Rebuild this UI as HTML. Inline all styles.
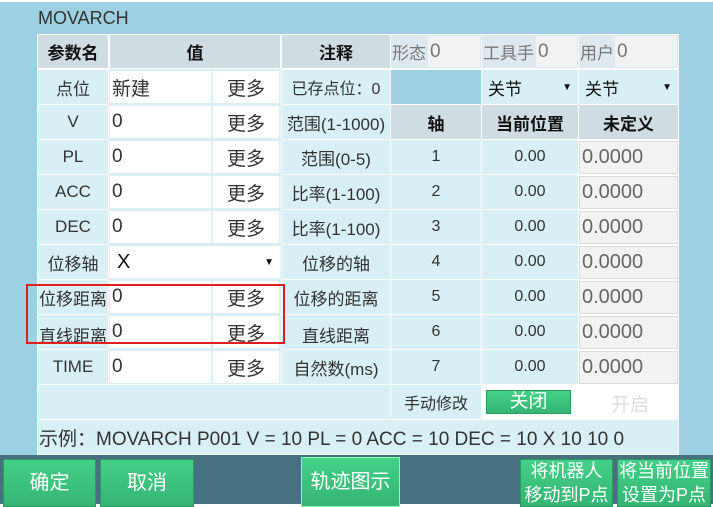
<!DOCTYPE html>
<html><head><meta charset="utf-8"><style>
*{margin:0;padding:0;box-sizing:border-box}
body{width:713px;height:504px;overflow:hidden;background:#fff;font-family:"Liberation Sans","Noto Sans CJK SC",sans-serif;color:#333;position:relative}
.bg{position:absolute;left:0;top:2px;width:713px;height:453px;background:#9dd0e2}
.t{position:absolute;left:37px;top:34px;width:642px;height:421px;background:#fff}
.c{position:absolute;display:flex;align-items:center;justify-content:center;font-size:16px;background:#d9eff6;white-space:nowrap}
.h{background:#cfdde2;font-weight:bold;color:#111;font-size:17px}
.w{background:#fff;justify-content:flex-start;padding-left:2px;font-size:19px}
.m{background:#fff;font-size:19px}
.g{background:#f2f2f2;border:1px solid #ddd;justify-content:flex-start;padding-left:2px;font-size:20px;color:#666}
.btn{position:absolute;background:linear-gradient(#44d088,#35b574);border:1px solid #2a9a5e;color:#fff;display:flex;align-items:center;justify-content:center;font-size:20px;text-align:center;line-height:24px;white-space:nowrap;overflow:hidden}
.bar{position:absolute;left:0;top:455px;width:713px;height:49px;background:#477080}
.arr{position:absolute;right:6px;font-size:10px;color:#111}
.vs{position:absolute;left:109px;width:172px;height:35px;background:#d9eff6}
</style></head><body>
<div class="bg"></div>
<div style="position:absolute;left:38px;top:8px;font-size:18px;color:#333">MOVARCH</div>
<div class="t"></div>
<div class="vs" style="top:69px"></div><div class="vs" style="top:104px"></div><div class="vs" style="top:139px"></div><div class="vs" style="top:174px"></div><div class="vs" style="top:209px"></div><div class="vs" style="top:244px"></div><div class="vs" style="top:279px"></div><div class="vs" style="top:314px"></div><div class="vs" style="top:349px"></div>

<div class="c h" style="left:38px;top:35px;width:70px;height:33px">参数名</div>
<div class="c h" style="left:110px;top:35px;width:170px;height:33px">值</div>
<div class="c h" style="left:282px;top:35px;width:108px;height:33px">注释</div>
<div class="c" style="left:391px;top:35px;width:90px;height:33px;background:#dde9ee;justify-content:flex-start;color:#777;font-size:17px"><span style="padding-left:1px">形态</span><span style="position:absolute;left:37px;top:1px;width:52px;height:31px;background:#f2f2f2;font-size:19px;padding-left:2px;line-height:31px">0</span></div>
<div class="c" style="left:482px;top:35px;width:96px;height:33px;background:#dde9ee;justify-content:flex-start;color:#777;font-size:17px"><span style="padding-left:1px">工具手</span><span style="position:absolute;left:54px;top:1px;width:41px;height:31px;background:#f2f2f2;font-size:19px;padding-left:2px;line-height:31px">0</span></div>
<div class="c" style="left:579px;top:35px;width:99px;height:33px;background:#dde9ee;justify-content:flex-start;color:#777;font-size:17px"><span style="padding-left:1px">用户</span><span style="position:absolute;left:36px;top:1px;width:62px;height:31px;background:#f2f2f2;font-size:19px;padding-left:2px;line-height:31px">0</span></div>

<div class="c" style="left:38px;top:70px;width:70px;height:34px;font-size:17px">点位</div>
<div class="c w" style="left:110px;top:71px;width:101px;height:32px">新建</div>
<div class="c m" style="left:213px;top:71px;width:66px;height:32px">更多</div>
<div class="c" style="left:282px;top:70px;width:108px;height:34px;font-size:16px">已存点位：0</div>

<div class="c" style="left:38px;top:105px;width:70px;height:34px;font-size:17px">V</div>
<div class="c w" style="left:110px;top:106px;width:101px;height:32px">0</div>
<div class="c m" style="left:213px;top:106px;width:66px;height:32px">更多</div>
<div class="c" style="left:282px;top:105px;width:108px;height:34px;font-size:17px">范围(1-1000)</div>

<div class="c" style="left:38px;top:140px;width:70px;height:34px;font-size:17px">PL</div>
<div class="c w" style="left:110px;top:141px;width:101px;height:32px">0</div>
<div class="c m" style="left:213px;top:141px;width:66px;height:32px">更多</div>
<div class="c" style="left:282px;top:140px;width:108px;height:34px;font-size:17px">范围(0-5)</div>

<div class="c" style="left:38px;top:175px;width:70px;height:34px;font-size:17px">ACC</div>
<div class="c w" style="left:110px;top:176px;width:101px;height:32px">0</div>
<div class="c m" style="left:213px;top:176px;width:66px;height:32px">更多</div>
<div class="c" style="left:282px;top:175px;width:108px;height:34px;font-size:17px">比率(1-100)</div>

<div class="c" style="left:38px;top:210px;width:70px;height:34px;font-size:17px">DEC</div>
<div class="c w" style="left:110px;top:211px;width:101px;height:32px">0</div>
<div class="c m" style="left:213px;top:211px;width:66px;height:32px">更多</div>
<div class="c" style="left:282px;top:210px;width:108px;height:34px;font-size:17px">比率(1-100)</div>

<div class="c" style="left:38px;top:245px;width:70px;height:34px;font-size:17px">位移轴</div>
<div class="c w" style="left:110px;top:246px;width:170px;height:32px;padding-left:7px;color:#111;font-size:20px">X<span class="arr">▼</span></div>
<div class="c" style="left:282px;top:245px;width:108px;height:34px;font-size:17px">位移的轴</div>

<div class="c" style="left:38px;top:280px;width:70px;height:34px;font-size:17px">位移距离</div>
<div class="c w" style="left:110px;top:281px;width:101px;height:32px">0</div>
<div class="c m" style="left:213px;top:281px;width:66px;height:32px">更多</div>
<div class="c" style="left:282px;top:280px;width:108px;height:34px;font-size:17px">位移的距离</div>

<div class="c" style="left:38px;top:315px;width:70px;height:34px;align-items:flex-end;padding-bottom:2px;font-size:17px">直线距离</div>
<div class="c w" style="left:110px;top:316px;width:101px;height:32px">0</div>
<div class="c m" style="left:213px;top:316px;width:66px;height:32px">更多</div>
<div class="c" style="left:282px;top:315px;width:108px;height:34px;align-items:flex-end;padding-bottom:2px;font-size:17px">直线距离</div>

<div class="c" style="left:38px;top:350px;width:70px;height:34px;font-size:17px">TIME</div>
<div class="c w" style="left:110px;top:351px;width:101px;height:32px">0</div>
<div class="c m" style="left:213px;top:351px;width:66px;height:32px">更多</div>
<div class="c" style="left:282px;top:350px;width:108px;height:34px;font-size:17px">自然数(ms)</div>

<div class="c" style="left:38px;top:385px;width:352px;height:34px"></div>

<div class="c" style="left:391px;top:70px;width:90px;height:34px;background:#9dd0e2"></div>
<div class="c" style="left:482px;top:70px;width:96px;height:34px;justify-content:flex-start;padding-left:6px;color:#111;font-size:17px">关节<span class="arr">▼</span></div>
<div class="c" style="left:579px;top:70px;width:99px;height:34px;justify-content:flex-start;padding-left:6px;color:#111;font-size:17px">关节<span class="arr">▼</span></div>

<div class="c h" style="left:391px;top:105px;width:90px;height:34px">轴</div>
<div class="c h" style="left:482px;top:105px;width:96px;height:34px">当前位置</div>
<div class="c h" style="left:579px;top:105px;width:99px;height:34px">未定义</div>

<div class="c" style="left:391px;top:140px;width:90px;height:34px">1</div><div class="c" style="left:482px;top:140px;width:96px;height:34px">0.00</div><div class="c g" style="left:579px;top:141px;width:99px;height:33px">0.0000</div>
<div class="c" style="left:391px;top:175px;width:90px;height:34px">2</div><div class="c" style="left:482px;top:175px;width:96px;height:34px">0.00</div><div class="c g" style="left:579px;top:176px;width:99px;height:33px">0.0000</div>
<div class="c" style="left:391px;top:210px;width:90px;height:34px">3</div><div class="c" style="left:482px;top:210px;width:96px;height:34px">0.00</div><div class="c g" style="left:579px;top:211px;width:99px;height:33px">0.0000</div>
<div class="c" style="left:391px;top:245px;width:90px;height:34px">4</div><div class="c" style="left:482px;top:245px;width:96px;height:34px">0.00</div><div class="c g" style="left:579px;top:246px;width:99px;height:33px">0.0000</div>
<div class="c" style="left:391px;top:280px;width:90px;height:34px">5</div><div class="c" style="left:482px;top:280px;width:96px;height:34px">0.00</div><div class="c g" style="left:579px;top:281px;width:99px;height:33px">0.0000</div>
<div class="c" style="left:391px;top:315px;width:90px;height:34px">6</div><div class="c" style="left:482px;top:315px;width:96px;height:34px">0.00</div><div class="c g" style="left:579px;top:316px;width:99px;height:33px">0.0000</div>
<div class="c" style="left:391px;top:350px;width:90px;height:34px">7</div><div class="c" style="left:482px;top:350px;width:96px;height:34px">0.00</div><div class="c g" style="left:579px;top:351px;width:99px;height:33px">0.0000</div>

<div class="c" style="left:391px;top:385px;width:90px;height:34px">手动修改</div>
<div class="c" style="left:482px;top:385px;width:196px;height:34px;background:#fff"></div>
<div class="btn" style="left:486px;top:390px;width:85px;height:24px;font-size:19px">关闭</div>
<div style="position:absolute;left:600px;top:390px;width:60px;text-align:center;font-size:19px;color:#ddd">开启</div>

<div class="c" style="left:38px;top:420px;width:640px;height:34px;justify-content:flex-start;padding-left:1px;font-size:19px">示例：MOVARCH P001 V = 10 PL = 0 ACC = 10 DEC = 10 X 10 10 0</div>

<div style="position:absolute;left:26px;top:284px;width:259px;height:60px;border:2px solid #e21d1d"></div>

<div class="bar"></div>
<div class="btn" style="left:3px;top:459px;width:93px;height:48px">确定</div>
<div class="btn" style="left:100px;top:459px;width:94px;height:48px">取消</div>
<div class="btn" style="left:301px;top:457px;width:99px;height:50px;border-color:#8fa">轨迹图示</div>
<div class="btn" style="left:520px;top:459px;width:93px;height:48px;font-size:18px">将机器人<br>移动到P点</div>
<div class="btn" style="left:617px;top:459px;width:94px;height:48px;font-size:18px">将当前位置<br>设置为P点</div>
</body></html>
